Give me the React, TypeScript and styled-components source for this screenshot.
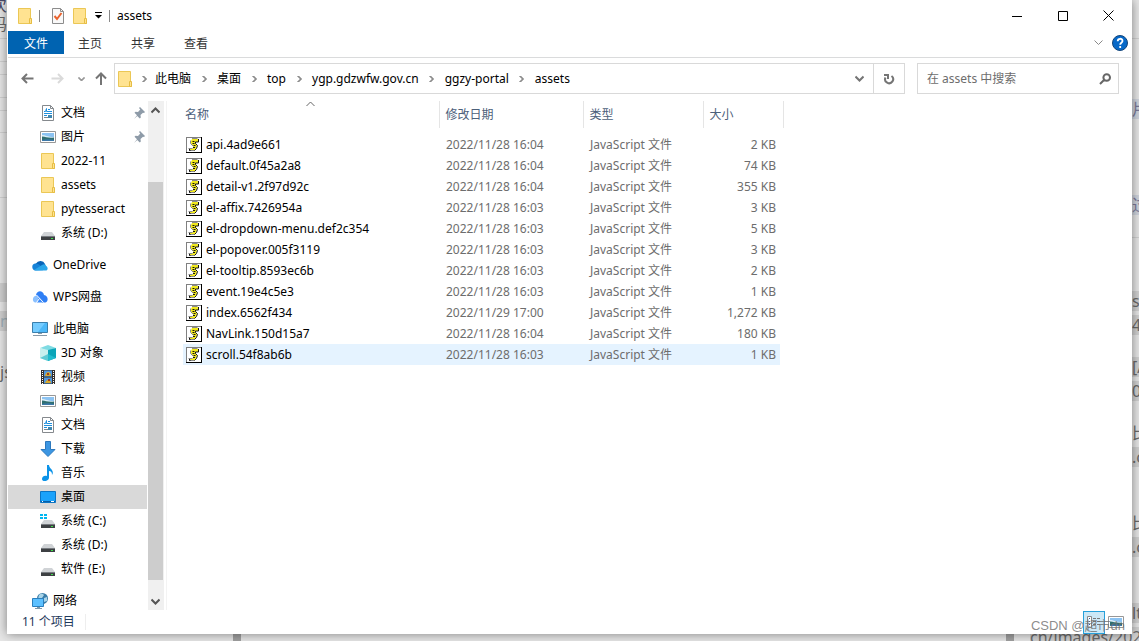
import React from 'react';
import styled, { createGlobalStyle } from 'styled-components';

const Global = createGlobalStyle`
  * { box-sizing: border-box; }
  body { margin: 0; background: #e6e6e6; font-family: 'Noto Sans', 'Noto Sans CJK SC', sans-serif; font-size: 12px; line-height: 16px; color: #000; }
  button, input { font: inherit; color: inherit; }
  button { border: 0; padding: 0; background: none; }
  a { color: inherit; text-decoration: none; }
  svg { display: block; flex: none; }
`;

const Desktop = styled.div`
  position: relative;
  display: flex;
  height: 100vh;
  padding: 0 7px 7px;
  overflow: hidden;
`;
const Backdrop = styled.div`
  position: absolute;
  inset: 0;
  color: #6a6a6a;
  font-size: 16px;
  line-height: 20px;
`;
const Fragment = styled.span<{ $x: number; $y: number; $w?: number; $bg?: string; $color?: string; $end?: boolean }>`
  position: absolute;
  left: ${(p) => p.$x}px;
  top: ${(p) => p.$y}px;
  width: ${(p) => p.$w || 7}px;
  min-height: 19px;
  overflow: hidden;
  white-space: nowrap;
  direction: ${(p) => (p.$end ? 'rtl' : 'ltr')};
  background: ${(p) => p.$bg || 'transparent'};
  color: ${(p) => p.$color || 'inherit'};
`;
const Rule = styled.span<{ $y: number; $side: 'left' | 'right' }>`
  position: absolute;
  ${(p) => p.$side}: 0;
  top: ${(p) => p.$y}px;
  width: 7px;
  height: 1px;
  background: #d0d0d0;
`;
const Stub = styled.span<{ $x: number }>`
  position: absolute;
  left: ${(p) => p.$x}px;
  bottom: 0;
  width: 8px;
  height: 8px;
  background: #a0a0a0;
`;

const Window = styled.main`
  position: relative;
  flex: 1;
  min-width: 0;
  display: flex;
  flex-direction: column;
  padding: 0 1px;
  background: #fff;
  box-shadow: 0 0 10px rgba(0, 0, 0, 0.45);
`;

const TitleBar = styled.header`
  display: flex;
  align-items: center;
  height: 31px;
  flex: none;
  padding-left: 9px;
`;
const QuickIcons = styled.div`
  display: flex;
  align-items: center;
  gap: 6px;
`;
const IconButton = styled.button<{ $w?: number; $h?: number }>`
  display: flex;
  align-items: center;
  justify-content: center;
  width: ${(p) => p.$w || 16}px;
  height: ${(p) => p.$h || 18}px;
  flex: none;
`;
const Separator = styled.span`
  width: 1px;
  height: 12px;
  background: #8a8a8a;
`;
const Title = styled.h1`
  flex: 1;
  margin: 0 0 0 7px;
  font-size: 12px;
  font-weight: 400;
`;

const Ribbon = styled.nav`
  display: flex;
  align-items: center;
  height: 27px;
  flex: none;
  padding-bottom: 3px;
  border-bottom: 1px solid #dadbdc;
`;
const Tab = styled.button<{ $file?: boolean }>`
  width: ${(p) => (p.$file ? 56 : 53)}px;
  height: 23px;
  padding: ${(p) => (p.$file ? '2px 0 0' : '2px 1px 0 0')};
  background: ${(p) => (p.$file ? '#0063b1' : 'transparent')};
  color: ${(p) => (p.$file ? '#fff' : '#333')};
`;
const RibbonEnd = styled.div`
  display: flex;
  align-items: center;
  gap: 9px;
  margin-left: auto;
  padding-right: 3px;
`;

const AddressRow = styled.div`
  display: flex;
  align-items: center;
  height: 43px;
  flex: none;
  padding: 0 12px 2px 6px;
`;
const History = styled.div`
  display: flex;
  align-items: center;
  width: 100px;
  flex: none;
`;
const AddressBox = styled.div`
  display: flex;
  flex: 1;
  min-width: 0;
  height: 31px;
  border: 1px solid #d9d9d9;
`;
const Chevron = styled.span`
  display: flex;
  justify-content: center;
  width: 26px;
`;
const Crumbs = styled.div`
  display: flex;
  flex: 1;
  align-items: center;
  padding-left: 2px;
  svg + ${Chevron} { width: 22px; }
`;
const Refresh = styled.button`
  display: flex;
  align-items: center;
  justify-content: center;
  width: 31px;
  border-left: 1px solid #d9d9d9;
`;
const Search = styled.label`
  display: flex;
  align-items: center;
  flex: 0 0 202px;
  min-width: 0;
  height: 31px;
  margin-left: 12px;
  padding: 0 7px 0 9px;
  border: 1px solid #d9d9d9;
`;
const SearchInput = styled.input`
  flex: 1;
  min-width: 0;
  padding: 0;
  border: 0;
  outline: 0;
  &::placeholder { color: #6d6d6d; opacity: 1; }
`;

const Body = styled.div`
  display: flex;
  flex: 1;
  min-height: 0;
`;
const NavPane = styled.nav`
  width: 139px;
  flex: none;
  overflow: hidden;
`;
const NavGroup = styled.ul`
  margin: 0 0 8px;
  padding: 0;
  list-style: none;
`;
const NavItem = styled.a<{ $level: number; $active?: boolean }>`
  display: flex;
  align-items: center;
  gap: 5px;
  height: 24px;
  padding-left: ${(p) => (p.$level ? 32 : 24)}px;
  background: ${(p) => (p.$active ? '#d9d9d9' : 'transparent')};
  white-space: nowrap;
`;
const NavLabel = styled.span`
  flex: 1;
`;
const ScrollBar = styled.div`
  display: flex;
  flex-direction: column;
  width: 16px;
  margin-left: 1px;
  background: #f0f0f0;
  flex: none;
`;
const ScrollTrack = styled.div`
  display: flex;
  flex: 1;
  padding: 63px 1px 12px 0;
`;
const ScrollThumb = styled.div`
  flex: 1;
  background: #cdcdcd;
`;
const FilePane = styled.section`
  flex: 1;
  min-width: 0;
  margin-left: 2px;
  padding-left: 16px;
  border-left: 1px solid #f3f3f3;
`;
const FileTable = styled.table`
  width: 600px;
  table-layout: fixed;
  border-collapse: collapse;
`;
const HeadCell = styled.th`
  position: relative;
  height: 27px;
  padding: 0 0 0 6px;
  border-right: 1px solid #e5e5e5;
  color: #4c607a;
  font-weight: 400;
  text-align: left;
  &:first-child { padding-left: 2px; }
`;
const SortMark = styled.span`
  position: absolute;
  top: 0;
  left: 0;
  right: 0;
  display: flex;
  justify-content: center;
`;
const Spacer = styled.tr`
  height: 6px;
`;
const FileRow = styled.tr<{ $hover?: boolean }>`
  height: 21px;
  background: ${(p) => (p.$hover ? 'linear-gradient(to left, transparent 3px, #e5f3ff 3px)' : 'transparent')};
`;
const Cell = styled.td<{ $align?: string }>`
  padding: 0 7px;
  color: #6d6d6d;
  text-align: ${(p) => p.$align || 'left'};
  white-space: nowrap;
`;
const NameCell = styled(Cell)`
  padding-left: 3px;
  color: #000;
`;
const FileName = styled.span`
  display: flex;
  align-items: center;
  gap: 4px;
`;

const StatusBar = styled.footer`
  display: flex;
  align-items: center;
  justify-content: space-between;
  height: 24px;
  flex: none;
  padding: 0 4px 0 14px;
  color: #1e395b;
`;
const ItemCount = styled.span`
  padding-right: 10px;
  border-right: 1px solid #eee;
`;
const Views = styled.div`
  display: flex;
  align-items: center;
`;
const ViewButton = styled.button<{ $on?: boolean }>`
  display: flex;
  align-items: center;
  justify-content: center;
  width: 22px;
  height: 23px;
  border: 1px solid ${(p) => (p.$on ? '#26a0da' : 'transparent')};
  background: ${(p) => (p.$on ? '#cce8f6' : 'transparent')};
`;
const Watermark = styled.span`
  position: absolute;
  right: 14px;
  bottom: 6px;
  color: rgba(110, 110, 110, 0.8);
  font-family: 'Liberation Sans', 'Noto Sans CJK SC', sans-serif;
  font-size: 13px;
  line-height: 18px;
`;

type Pt = { d: string; w?: number; h?: number; c?: string; s?: number };
const Stroke = ({ d, w = 9, h = 9, c = '#666', s = 1 }: Pt) => (
  <svg width={w} height={h} viewBox={`0 0 ${w} ${h}`} fill="none" stroke={c} strokeWidth={s}><path d={d} /></svg>
);

const FolderIcon = () => (
  <svg width="16" height="18" viewBox="0 0 16 18">
    <path d="M1.5 1.5h12v11h1v4h-13z" fill="#ffe391" stroke="#ebc755" />
    <path d="M12.5 16.5v-5h2v5z" fill="#ffe391" stroke="#e6bd44" />
  </svg>
);
const DocIcon = () => (
  <svg width="16" height="16" viewBox="0 0 16 16">
    <path d="M2.5.5h8l3 3v12h-11z" fill="#fff" stroke="#85898d" />
    <path d="M10.5.5v3h3" fill="none" stroke="#85898d" />
    <path d="M4 6.500h1.500l1-3v3H12M8 4.500h2M4 8.500h8M4 10.500h3" fill="none" stroke="#1e8fdd" />
    <path d="M4 12.500h4" stroke="#7c868f" />
    <path d="M8 10h4v3H8z" fill="#3f87b0" />
  </svg>
);
const PictureIcon = () => (
  <svg width="16" height="16" viewBox="0 0 16 16">
    <path d="M.5 2.500h15v11H.5z" fill="#fff" stroke="#979797" />
    <path d="M2 4h12v8H2z" fill="#8cc3f2" />
    <path d="M2 6c4 0 5 2 12 2v1H2z" fill="#d9edf6" />
    <path d="M2 7.500c4 0 6 2 12 1V12H2z" fill="#2f6e70" />
    <path d="M2 11c4-1 8-1 12 0v1H2z" fill="#3c78a8" />
  </svg>
);
const DriveIcon = ({ win }: { win?: boolean }) => (
  <svg width="16" height="16" viewBox="0 0 16 16">
    <path d="M4 7h8l3 4H1z" fill="#d0d3d6" />
    <path d="M1 11h14v4H1z" fill="#3d4043" />
    <path d="M1 11h14v1H1z" fill="#777b80" />
    <path d="M11 13h2v1h-2z" fill="#3ee04a" />
    {win && <path d="M0 1h3v2H0zM4 1h3v2H4zM0 4h3v2H0zM4 4h3v2H4z" fill="#00b7f1" />}
  </svg>
);
const OneDriveIcon = () => (
  <svg width="16" height="16" viewBox="0 0 16 16">
    <path d="M4 13a4 4 0 0 1 0-6.500A5 5 0 0 1 13 7l1 5z" fill="#0864b8" />
    <path d="M3.500 13.500A3.500 3.500 0 0 1 3 6.600c2-.4 3 .4 5 1.600l3 5z" fill="#1683d8" />
    <path d="M2 13l8-5c2-1.500 4-.5 4 1 2 .5 2.500 4.500-.5 4.500h-10z" fill="#2aa6ea" />
  </svg>
);
const WpsIcon = () => (
  <svg width="16" height="16" viewBox="0 0 16 16">
    <path d="M4 6c1-5 7-5 8 0 4 .5 5 6 1.500 7.500h-3z" fill="#2f7ff5" />
    <path d="M5 6.500l6 7H5C6 11 6 9 5 6.500z" fill="#3d8cf8" />
    <path d="M3 13.500C0 13 0 7 4.500 6.500 7 9 7 11 4.500 13.500z" fill="#8ac0ff" />
    <path d="M4.500 6l7 7.500M7.500 9.500l-3 4" stroke="#fff" fill="none" />
  </svg>
);
const PcIcon = () => (
  <svg width="16" height="16" viewBox="0 0 16 16">
    <path d="M.5 1.500h15v10H.5z" fill="#4db8f8" stroke="#3a7fac" />
    <path d="M1 2h12L6 11H1z" fill="#75ccff" />
    <path d="M6 12h4v1H6zM1 14h14v1H1z" fill="#8799a7" />
  </svg>
);
const CubeIcon = () => (
  <svg width="16" height="16" viewBox="0 0 16 16">
    <path d="M0 3l8-3 8 3-8 3z" fill="#7fdbe3" />
    <path d="M0 3l8 2v11l-8-3z" fill="#c7f0ee" />
    <path d="M16 3L8 5v11l8-3z" fill="#0ba5b8" />
    <path d="M0 13l8-4v7z" fill="#5fcbd4" /><path d="M8 9l8 4-8 3z" fill="#22bccd" />
  </svg>
);
const VideoIcon = () => (
  <svg width="16" height="16" viewBox="0 0 16 16">
    <path d="M1 1h14v14H1z" fill="#35302c" />
    <path d="M4 1.500h8v6H4zM4 8.500h8v6H4z" fill="#5197dd" />
    <path d="M5 7c1-5 5-5 6-1v1zM5 14c2-4 4-4 6-1v1z" fill="#d9aa2c" />
    <path d="M7 4h2v2H7zM8 10h2v2H8z" fill="#9b3e22" />
    <path d="M2.500 2v13M13.500 2v13" stroke="#fff" strokeDasharray="1 1" />
  </svg>
);
const DownloadIcon = () => (
  <svg width="16" height="16" viewBox="0 0 16 16"><path d="M5.500.5h5v8h4.500L8 15.500 1 8.500h4.500z" fill="#3c96e2" stroke="#2c78bd" /></svg>
);
const MusicIcon = () => (
  <svg width="16" height="16" viewBox="0 0 16 16">
    <path d="M7 0h2c0 4 6 5 3 10 0-3-1-4-3-4v7c-1 4-7 4-7 1 0-2 2-4 5-3z" fill="#0c93e8" />
  </svg>
);
const DesktopIcon = () => (
  <svg width="16" height="16" viewBox="0 0 16 16">
    <path d="M.5 2.500h15v11H.5z" fill="#1aa2fb" stroke="#0b74c4" />
    <path d="M1 12.500h14" stroke="#075ea6" /><path d="M2 12.500h1M11 12.500h3" stroke="#fff" />
  </svg>
);
const NetworkIcon = () => (
  <svg width="16" height="16" viewBox="0 0 16 16">
    <circle cx="10.500" cy="5.500" r="5.500" fill="#3a7da8" />
    <path d="M7 2c2-2 4-1 5 0l-2 3-4 1zM12 5l3-1v4l-3 1z" fill="#a9d4e8" />
    <path d="M.5 5.500h11v8H.5z" fill="#5cc0ff" stroke="#2b7fbd" />
    <path d="M5 14h3v1H5zM3 15h7v1H3z" fill="#7d98aa" />
  </svg>
);
const PinIcon = () => (
  <svg width="15" height="16" viewBox="1 0 15 16">
    <path d="M9 2l5 5-1 1-1-.3-2.500 2.300.3 2.500-1 1-2.600-2.600L3 14l3-3.800-2.500-2.500 1-1 2.500.3L9.300 4.500 8 3z" fill="#8e9ba8" />
  </svg>
);
const ScriptIcon = () => (
  <svg width="16" height="16" viewBox="0 0 16 16">
    <path d="M0 0h16v16H0z" fill="#000" />
    <path d="M0 0h15v15H0z" fill="#808080" />
    <path d="M1 1h14v14H1z" fill="#fff" />
    <path d="M6 2h6v3H9.500L11 8.500l-1 3-1.500 2H4v-2h2.500L7.500 9 5 6.500V4z" fill="#f2ea1c" />
    <path d="M6 1.500h5.500M4.500 3.500v3l3 3M3.500 13.500h5M2.500 11.500h4" fill="none" stroke="#8a8a8a" />
    <path d="M12.500 2v3h-3v1.500l2 2-1 3-2 2M3.500 12v1.500h1" fill="none" stroke="#111" />
    <path d="M6.500 4.500h3M6.500 6.500h3M7.500 8.500h3M7 10.500h3" stroke="#111" strokeDasharray="2 1" />
  </svg>
);
const TaskIcon = () => (
  <svg width="14" height="16" viewBox="1 0 14 16">
    <path d="M1.500.5h8l3 3v12h-11z" fill="#f9f9f9" stroke="#8c8c8c" /><path d="M9.500.5v3h3" fill="none" stroke="#8c8c8c" />
    <path d="M3.500 8l2.500 3L10.500 5" fill="none" stroke="#e9622d" strokeWidth="2" />
  </svg>
);

type Nav = { name: string; icon: React.ReactNode; level?: number; pin?: boolean; active?: boolean };
const groups: Nav[][] = [
  [
    { name: '文档', icon: <DocIcon />, level: 1, pin: true },
    { name: '图片', icon: <PictureIcon />, level: 1, pin: true },
    { name: '2022-11', icon: <FolderIcon />, level: 1 },
    { name: 'assets', icon: <FolderIcon />, level: 1 },
    { name: 'pytesseract', icon: <FolderIcon />, level: 1 },
    { name: '系统 (D:)', icon: <DriveIcon />, level: 1 },
  ],
  [{ name: 'OneDrive', icon: <OneDriveIcon /> }],
  [{ name: 'WPS网盘', icon: <WpsIcon /> }],
  [
    { name: '此电脑', icon: <PcIcon /> },
    { name: '3D 对象', icon: <CubeIcon />, level: 1 },
    { name: '视频', icon: <VideoIcon />, level: 1 },
    { name: '图片', icon: <PictureIcon />, level: 1 },
    { name: '文档', icon: <DocIcon />, level: 1 },
    { name: '下载', icon: <DownloadIcon />, level: 1 },
    { name: '音乐', icon: <MusicIcon />, level: 1 },
    { name: '桌面', icon: <DesktopIcon />, level: 1, active: true },
    { name: '系统 (C:)', icon: <DriveIcon win />, level: 1 },
    { name: '系统 (D:)', icon: <DriveIcon />, level: 1 },
    { name: '软件 (E:)', icon: <DriveIcon />, level: 1 },
  ],
  [{ name: '网络', icon: <NetworkIcon /> }],
];

const files: [string, string, string][] = [
  ['api.4ad9e661', '2022/11/28 16:04', '2 KB'],
  ['default.0f45a2a8', '2022/11/28 16:04', '74 KB'],
  ['detail-v1.2f97d92c', '2022/11/28 16:04', '355 KB'],
  ['el-affix.7426954a', '2022/11/28 16:03', '3 KB'],
  ['el-dropdown-menu.def2c354', '2022/11/28 16:03', '5 KB'],
  ['el-popover.005f3119', '2022/11/28 16:03', '3 KB'],
  ['el-tooltip.8593ec6b', '2022/11/28 16:03', '2 KB'],
  ['event.19e4c5e3', '2022/11/28 16:03', '1 KB'],
  ['index.6562f434', '2022/11/29 17:00', '1,272 KB'],
  ['NavLink.150d15a7', '2022/11/28 16:04', '180 KB'],
  ['scroll.54f8ab6b', '2022/11/28 16:03', '1 KB'],
];
const path = ['此电脑', '桌面', 'top', 'ygp.gdzwfw.gov.cn', 'ggzy-portal', 'assets'];

export default function App() {
  return (
    <Desktop>
      <Global />
      <Backdrop aria-hidden="true">
        {[38, 61, 74, 97, 110, 132, 197].map((y) => <Rule key={y} $y={y} $side="left" />)}
        {[38, 237].map((y) => <Rule key={y} $y={y} $side="right" />)}
        <Fragment $x={0} $y={-5} $end $color="#4a4a68">次</Fragment>
        <Fragment $x={0} $y={14} $end>码</Fragment>
        <Fragment $x={0} $y={283} $bg="#cfcfcf" />
        <Fragment $x={0} $y={311} $bg="#cfcfcf" $color="#a0b0b8">nf</Fragment>
        <Fragment $x={0} $y={362}>js</Fragment>
        <Fragment $x={1132} $y={99} $bg="#ced3dc" $color="#7a7a9a">片</Fragment>
        <Fragment $x={1132} $y={195} $bg="#ced3dc" $color="#7a7a9a">过</Fragment>
        <Fragment $x={1132} $y={291} $bg="#d0d0d0">s</Fragment>
        <Fragment $x={1132} $y={315} $bg="#d0d0d0">4</Fragment>
        <Fragment $x={1132} $y={357} $bg="#d0d0d0">[A</Fragment>
        <Fragment $x={1132} $y={381} $bg="#d0d0d0">0</Fragment>
        <Fragment $x={1132} $y={423}>比</Fragment>
        <Fragment $x={1132} $y={447} $bg="#d0d0d0">.c</Fragment>
        <Fragment $x={1132} $y={513}>比</Fragment>
        <Fragment $x={1132} $y={537} $bg="#d0d0d0">.c</Fragment>
        <Fragment $x={1132} $y={603} $bg="#d0d0d0">lt</Fragment>
        <Fragment $x={1030} $y={627} $w={109} $bg="#d0d0d0">cn/images/2022</Fragment>
        <Stub $x={233} />
        <Stub $x={1006} />
      </Backdrop>

      <Window>
        <TitleBar>
          <QuickIcons>
            <FolderIcon />
            <Separator />
            <span />
            <IconButton aria-label="属性" $w={14}><TaskIcon /></IconButton>
            <IconButton aria-label="新建文件夹"><FolderIcon /></IconButton>
            <IconButton aria-label="自定义快速访问工具栏" $w={9}>
              <svg width="9" height="7" viewBox="0 0 9 7"><path d="M1 0h7v1H1zM1 3h7L4.500 6.500z" fill="#000" /></svg>
            </IconButton>
            <Separator />
          </QuickIcons>
          <Title>assets</Title>
          <IconButton aria-label="最小化" $w={46} $h={30}><Stroke w={10} h={10} c="#000" d="M0 5.500h10" /></IconButton>
          <IconButton aria-label="最大化" $w={45} $h={30}><Stroke w={10} h={10} c="#000" d="M.5.5h9v9h-9z" /></IconButton>
          <IconButton aria-label="关闭" $w={46} $h={30}><Stroke w={11} h={11} c="#000" d="M.5.5l10 10M10.500.5l-10 10" /></IconButton>
        </TitleBar>

        <Ribbon>
          <Tab $file>文件</Tab>
          <Tab>主页</Tab>
          <Tab>共享</Tab>
          <Tab>查看</Tab>
          <RibbonEnd>
            <IconButton aria-label="展开功能区" $w={10}><Stroke c="#888" s={1} d="M.5 2.500l4 4 4-4" /></IconButton>
            <IconButton aria-label="帮助">
              <svg width="16" height="16" viewBox="0 0 16 16">
                <circle cx="8" cy="8" r="7.500" fill="#0668c8" stroke="#13457a" />
                <path d="M5.700 6.200C5.700 3 10.500 3 10.500 6c0 1.700-2.300 1.900-2.300 3.700M8.200 11v2" stroke="#fff" strokeWidth="1.800" fill="none" />
              </svg>
            </IconButton>
          </RibbonEnd>
        </Ribbon>

        <AddressRow>
          <History>
            <IconButton aria-label="后退" $w={26}><Stroke w={13} h={11} c="#757575" s={2} d="M6 1L1.500 5.500 6 10M1.500 5.500H12.500" /></IconButton>
            <IconButton aria-label="前进" $w={34}><Stroke w={13} h={11} c="#dadada" s={2} d="M7 1l4.500 4.500L7 10M11.500 5.500H.5" /></IconButton>
            <IconButton aria-label="最近位置" $w={14}><Stroke w={7} h={6} c="#777" s={1} d="M.5 1l3 3 3-3M.5 2l3 3 3-3" /></IconButton>
            <IconButton aria-label="上移" $w={26}><Stroke w={12} h={13} c="#757575" s={2} d="M1 6.500l5-5 5 5M6 1.500V13" /></IconButton>
          </History>
          <AddressBox>
            <Crumbs>
              <FolderIcon />
              {path.map((p) => (
                <React.Fragment key={p}>
                  <Chevron><Stroke w={5} h={8} c="#666" d="M.5 1l3 3-3 3M1.500 1l3 3-3 3" s={1} /></Chevron>
                  <a href="#path">{p}</a>
                </React.Fragment>
              ))}
            </Crumbs>
            <IconButton aria-label="历史地址" $w={28} $h={29}><Stroke c="#757575" s={2} d="M.5 2.500l4 4 4-4" /></IconButton>
            <Refresh aria-label="刷新">
              <Stroke w={12} h={12} c="#757575" s={2} d="M2.500 4.500A4 4 0 1 0 8.500 3M1 2h4v4" />
            </Refresh>
          </AddressBox>
          <Search>
            <SearchInput type="search" placeholder="在 assets 中搜索" aria-label="搜索" />
            <Stroke w={12} h={12} c="#666" s={2} d="M1 11l4-4M11 4.500a3.300 3.300 0 1 1-6.600 0a3.300 3.300 0 1 1 6.600 0z" />
          </Search>
        </AddressRow>

        <Body>
          <NavPane aria-label="导航窗格">
            {groups.map((g, i) => (
              <NavGroup key={i}>
                {g.map((n) => (
                  <li key={n.name}>
                    <NavItem href="#folder" $level={n.level || 0} $active={n.active}>
                      {n.icon}
                      <NavLabel>{n.name}</NavLabel>
                      {n.pin && <PinIcon />}
                    </NavItem>
                  </li>
                ))}
              </NavGroup>
            ))}
          </NavPane>
          <ScrollBar>
            <IconButton aria-label="向上滚动" $w={15}><Stroke c="#555" s={2} d="M.5 6.500l4-4 4 4" /></IconButton>
            <ScrollTrack><ScrollThumb /></ScrollTrack>
            <IconButton aria-label="向下滚动" $w={15}><Stroke c="#555" s={2} d="M.5 2.500l4 4 4-4" /></IconButton>
          </ScrollBar>
          <FilePane>
            <FileTable>
              <colgroup>
                <col width="256" /><col width="144" /><col width="120" /><col width="80" />
              </colgroup>
              <thead>
                <tr>
                  <HeadCell>名称<SortMark><Stroke d="M.5 5l4-4 4 4" /></SortMark></HeadCell>
                  <HeadCell>修改日期</HeadCell>
                  <HeadCell>类型</HeadCell>
                  <HeadCell>大小</HeadCell>
                </tr>
              </thead>
              <tbody>
                <Spacer />
                {files.map(([name, date, size], i) => (
                  <FileRow key={name} $hover={i === files.length - 1}>
                    <NameCell><FileName><ScriptIcon />{name}</FileName></NameCell>
                    <Cell>{date}</Cell>
                    <Cell>JavaScript 文件</Cell>
                    <Cell $align="right">{size}</Cell>
                  </FileRow>
                ))}
              </tbody>
            </FileTable>
          </FilePane>
        </Body>

        <StatusBar>
          <ItemCount>11 个项目</ItemCount>
          <Views>
            <ViewButton $on aria-label="详细信息">
              <svg width="14" height="12" viewBox="0 0 14 12"><path d="M.5.5h4v11h-4z" fill="#fff" stroke="#888" /><path d="M2 2h1v1H2zM2 5h1v1H2zM2 8h1v1H2z" fill="#335f9e" /><path d="M6 2.500h8M6 5.500h8M6 8.500h8" stroke="#777" strokeDasharray="3 1" /></svg>
            </ViewButton>
            <ViewButton aria-label="大缩略图"><PictureIcon /></ViewButton>
          </Views>
        </StatusBar>
      </Window>
      <Watermark>CSDN @超市dn</Watermark>
    </Desktop>
  );
}
